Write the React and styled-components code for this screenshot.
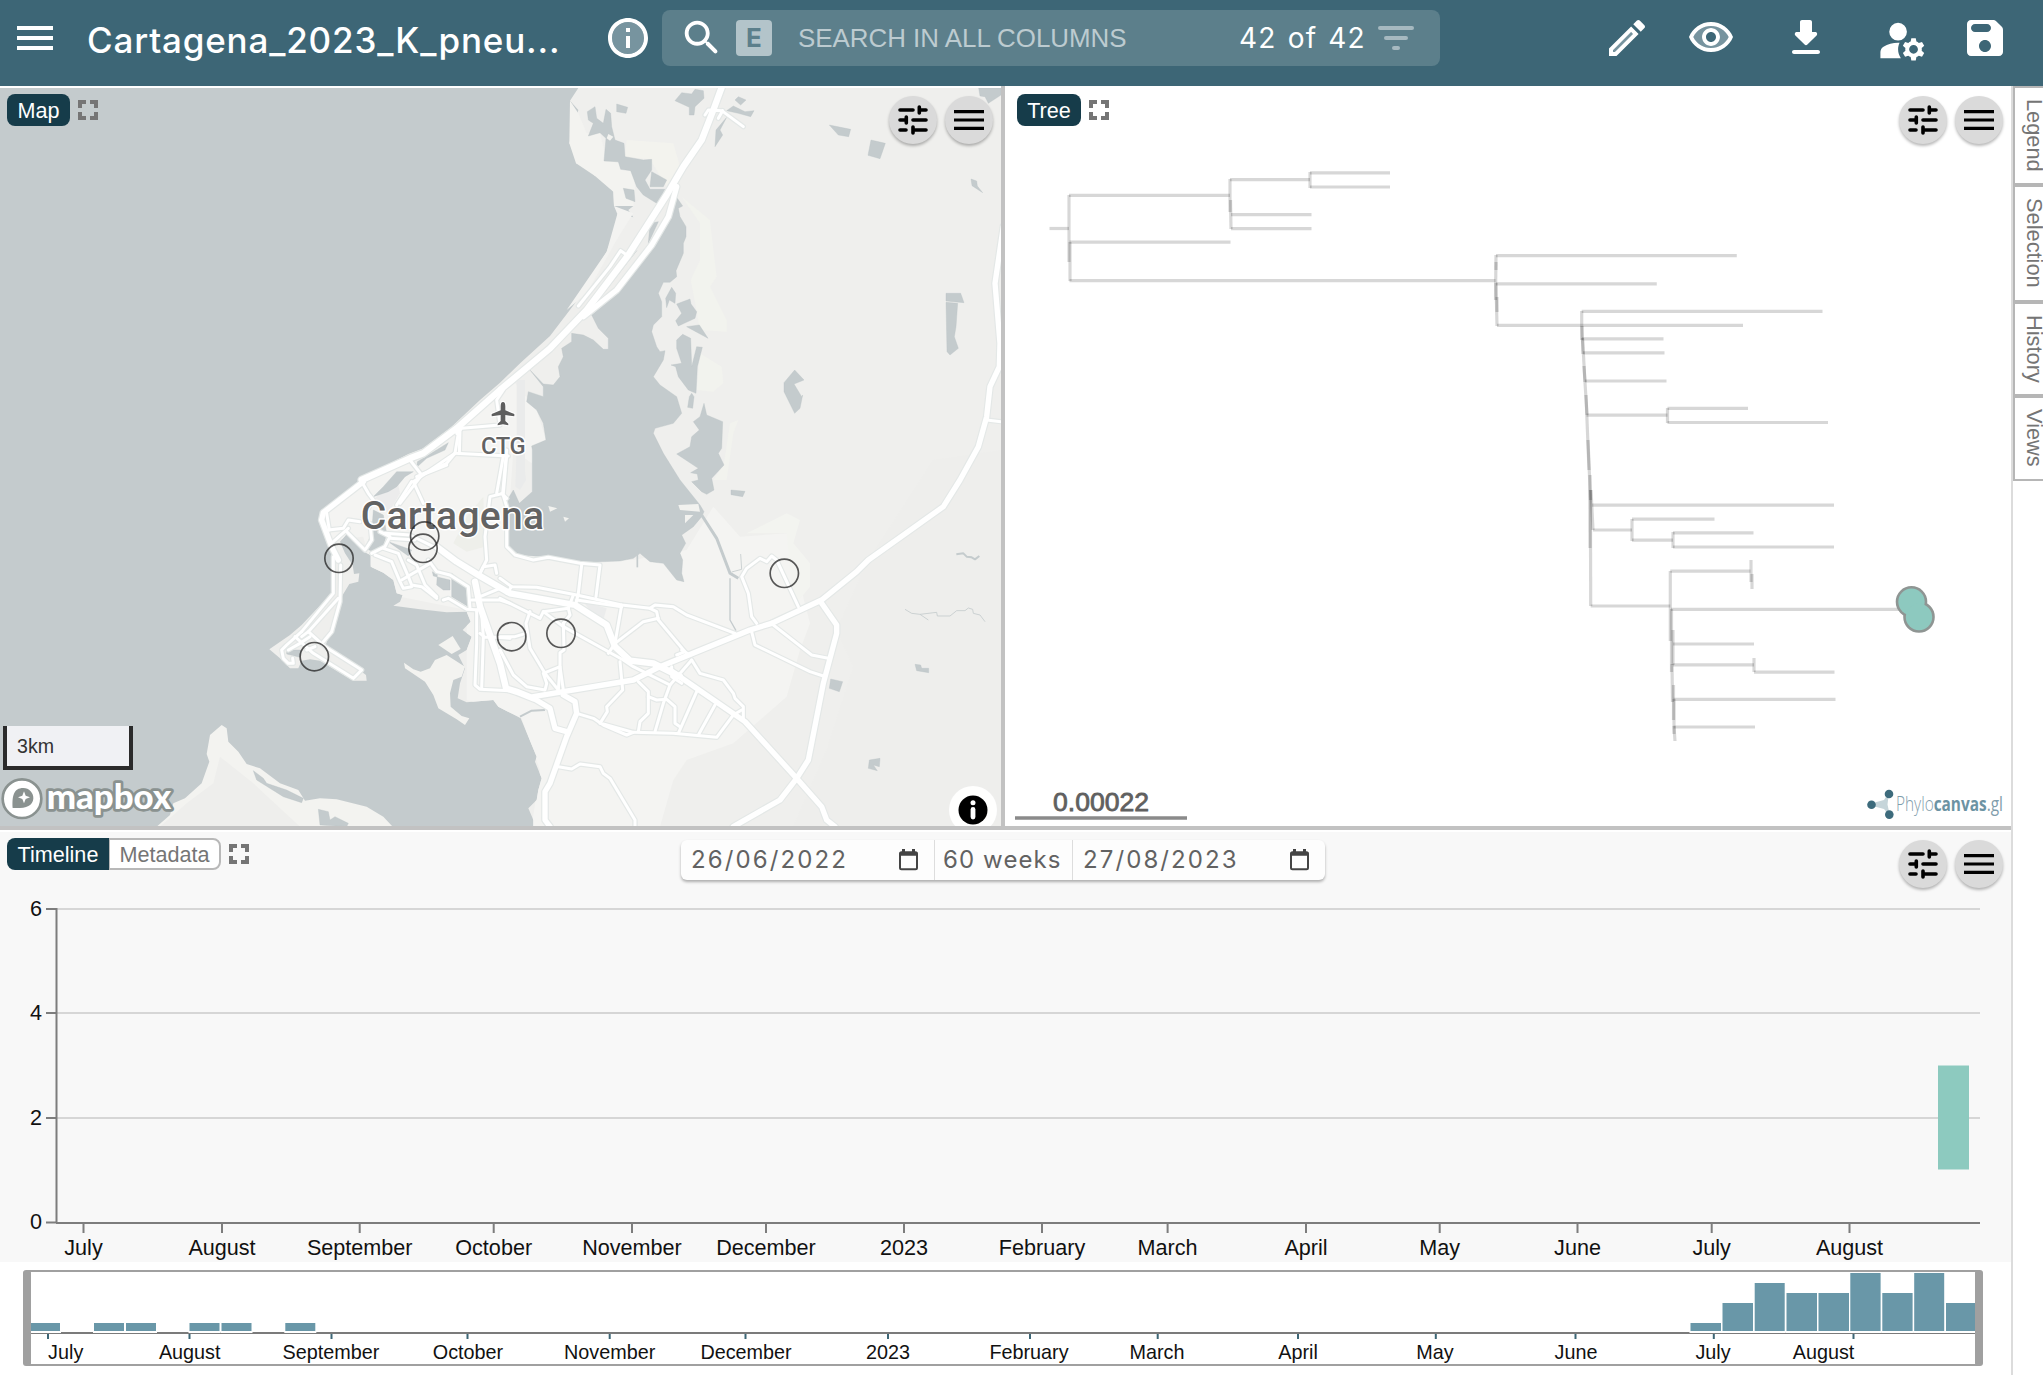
import React from "react";
import styled, { createGlobalStyle } from "styled-components";

const GlobalStyle = createGlobalStyle`
  * { box-sizing: border-box; }
  html, body { margin: 0; background: #fff; overflow: hidden; }
  body { font-family: "Liberation Sans", Arial, sans-serif; font-size: 21.6px; }
  svg { display: block; }
`;

const App_ = styled.div`
  width: 2043px;
  height: 1375px;
  display: flex;
  flex-direction: column;
  overflow: hidden;
`;

/* ---------- header ---------- */
const Header = styled.header`
  height: 86px;
  flex: none;
  background: #3d6676;
  color: #fff;
  display: flex;
  align-items: flex-start;
  padding: 10px 34px 0 17px;
`;
const MenuLines = styled.div`
  width: 36px;
  height: 24px;
  margin-top: 16px;
  display: flex;
  flex-direction: column;
  justify-content: space-between;
  span { height: 4px; background: #fff; }
`;
const Title = styled.h1`
  margin: 0 0 0 34px;
  width: 515px;
  height: 56px;
  font: 500 35px/60px "Inter", sans-serif;
  letter-spacing: 0.82px;
  white-space: nowrap;
`;
const InfoWrap = styled.div`
  margin: 4px 10px 0 2px;
`;
const SearchBox = styled.div`
  width: 778px;
  height: 56px;
  border-radius: 8px;
  background: #5c7f8b;
  display: flex;
  align-items: center;
  padding: 0 17px 0 17px;
`;
const KeyBadge = styled.div`
  width: 36px;
  height: 36px;
  margin-left: 11px;
  border-radius: 4px;
  background: #b3c4ca;
  color: #5c7f8b;
  display: flex;
  align-items: center;
  justify-content: center;
  font: 700 26px/36px "Inter", sans-serif;
`;
const Placeholder = styled.div`
  margin-left: 26px;
  width: 441px;
  font-size: 25.9px;
  color: #bccbd0;
  white-space: nowrap;
`;
const Count = styled.div`
  width: 139px;
  font: 400 28px/57px "Inter", sans-serif;
  letter-spacing: 1.2px;
  word-spacing: 2px;
  white-space: nowrap;
`;
const Actions = styled.nav`
  margin-left: auto;
  display: flex;
  align-items: flex-start;
  padding-top: 4px;
`;
const ActionSlot = styled.div`
  margin-left: ${(p) => p.$gap}px;
  height: 48px;
`;

/* ---------- workspace ---------- */
const Workspace = styled.main`
  flex: 1;
  min-height: 0;
  display: grid;
  grid-template-columns: 2011px 2px 30px;
`;
const Gutter = styled.div`
  background: #dcdcdc;
`;
const Stage = styled.div`
  display: flex;
  flex-direction: column;
`;
const TopRow = styled.div`
  height: 740px;
  display: grid;
  grid-template-columns: 1001px 4px 1006px;
`;
const Splitter = styled.div`
  background: #c2c2c2;
  ${(p) => p.$horizontal && "height: 4px; margin-bottom: 2px;"}
`;
const Pane = styled.section`
  position: relative;
  overflow: hidden;
  background: ${(p) => p.$bg || "#fff"};
  padding-top: ${(p) => p.$top || 0}px;
`;
const PaneTabs = styled.div`
  position: absolute;
  top: ${(p) => p.$top}px;
  left: ${(p) => p.$left}px;
  display: flex;
  align-items: center;
  height: 32px;
`;
const PaneTab = styled.div`
  height: 32px;
  width: ${(p) => p.$w}px;
  display: flex;
  align-items: center;
  justify-content: center;
  padding-top: 1px;
  font-size: 21.6px;
  color: ${(p) => (p.$active ? "#fff" : "#757575")};
  background: ${(p) => (p.$active ? "#163c4a" : "#fff")};
  border: ${(p) => (p.$active ? "none" : "2px solid #b8b8b8")};
  border-left-width: ${(p) => (p.$active ? 0 : 1)}px;
  border-radius: ${(p) => p.$radius || "8px"};
`;
const ExpandSlot = styled.div`
  margin-left: 8px;
`;
const PaneButtons = styled.div`
  position: absolute;
  top: ${(p) => p.$top}px;
  right: 8px;
  display: flex;
  gap: 8px;
`;
const RoundButton = styled.div`
  width: 48px;
  height: 48px;
  border-radius: 50%;
  background: #dadada;
  box-shadow: 0 2px 3px rgba(0, 0, 0, 0.28);
  display: flex;
  align-items: center;
  justify-content: center;
`;
const ScaleBar = styled.div`
  position: absolute;
  left: 3px;
  top: 640px;
  width: 130px;
  height: 44px;
  background: #f0f1f4;
  border: 4px solid #2b2b2b;
  border-top: 0;
  padding-left: 10px;
  font-size: 19.6px;
  line-height: 41px;
  color: #333;
`;
const Attribution = styled.div`
  position: absolute;
  left: 949px;
  top: 700px;
  width: 48px;
  height: 48px;
  border-radius: 24px;
  background: rgba(255, 255, 255, 0.95);
  padding: 9px;
`;

/* ---------- side rail ---------- */
const Rail = styled.aside`
  overflow: hidden;
  background: #fff;
`;
const RailTab = styled.div`
  width: 44px;
  height: ${(p) => p.$h}px;
  border: 2px solid #b6b6b6;
  writing-mode: vertical-rl;
  font-size: 21.8px;
  line-height: 34px;
  color: #757575;
  padding: 11px 0 0 2px;
  display: flex;
  flex-direction: column;
  justify-content: flex-end;
  white-space: nowrap;
`;

/* ---------- timeline ---------- */
const TimelinePane = styled(Pane)`
  height: 430px;
  display: flex;
  flex-direction: column;
`;
const Filters = styled.div`
  width: 644px;
  height: 40px;
  margin: 8px 0 0 681px;
  display: flex;
  align-items: stretch;
  background: #fdfdfd;
  border-radius: 6px;
  box-shadow: 0 2px 3px rgba(0, 0, 0, 0.3);
  font: 400 24px/39px "Inter", sans-serif;
  color: #626262;
`;
const FilterCell = styled.div`
  width: ${(p) => p.$w}px;
  padding: 0 15px 1px ${(p) => p.$pad || 10}px;
  display: flex;
  justify-content: space-between;
  align-items: center;
  white-space: nowrap;
  letter-spacing: ${(p) => p.$ls}px;
  border-left: ${(p) => (p.$first ? "none" : "1px solid #ddd")};
`;
const Chart = styled.div`
  margin-top: auto;
`;

/* ---------- icons ---------- */
const Icon = ({ d, size = 48, tone, color = "#fff" }) => (
  <svg width={size} height={size} viewBox="0 0 24 24" fill={color}>
    {tone && <path d={tone} opacity=".3" />}
    <path d={d} />
  </svg>
);
const I = {
  info: "M11 7h2v2h-2zm0 4h2v6h-2zm1-9C6.48 2 2 6.48 2 12s4.48 10 10 10 10-4.48 10-10S17.52 2 12 2zm0 18c-4.41 0-8-3.59-8-8s3.59-8 8-8 8 3.59 8 8-3.59 8-8 8z",
  infoTone: "M12 4c-4.41 0-8 3.59-8 8s3.59 8 8 8 8-3.59 8-8-3.59-8-8-8z",
  search: "M15.5 14h-.79l-.28-.27C15.41 12.59 16 11.11 16 9.5 16 5.91 13.09 3 9.5 3S3 5.91 3 9.5 5.91 16 9.5 16c1.61 0 3.09-.59 4.23-1.57l.27.28v.79l4.25 4.25c.41.41 1.08.41 1.49 0 .41-.41.41-1.08 0-1.49L15.5 14zm-6 0C7.01 14 5 11.99 5 9.5S7.01 5 9.5 5 14 7.01 14 9.5 11.99 14 9.5 14z",
  edit: "M14.06 9.02l.92.92L5.92 19H5v-.92l9.06-9.06M17.66 3c-.25 0-.51.1-.7.29l-1.83 1.83 3.75 3.75 1.83-1.83c.39-.39.39-1.02 0-1.41l-2.34-2.34c-.2-.2-.45-.29-.71-.29zm-3.6 3.19L3 17.25V21h3.75L17.81 9.94l-3.75-3.75z",
  editTone: "M5 18.08V19h.92l9.06-9.06-.92-.92z",
  eye: "M12 4C7 4 2.73 7.11 1 11.5 2.73 15.89 7 19 12 19s9.27-3.11 11-7.5C21.27 7.11 17 4 12 4zm0 13c-3.79 0-7.17-2.13-8.82-5.5C4.83 8.13 8.21 6 12 6s7.17 2.13 8.82 5.5C19.17 14.87 15.79 17 12 17zm0-10c-2.48 0-4.5 2.02-4.5 4.5S9.52 16 12 16s4.5-2.02 4.5-4.5S14.48 7 12 7zm0 7c-1.38 0-2.5-1.12-2.5-2.5S10.62 9 12 9s2.5 1.12 2.5 2.5S13.38 14 12 14z",
  eyeTone: "M12 6c-3.79 0-7.17 2.13-8.82 5.5C4.83 14.87 8.21 17 12 17s7.17-2.13 8.82-5.5C19.17 8.13 15.79 6 12 6zm0 10c-2.48 0-4.5-2.02-4.5-4.5S9.52 7 12 7s4.5 2.02 4.5 4.5S14.48 16 12 16z",
  download: "M16.59 9H15V4c0-.55-.45-1-1-1h-4c-.55 0-1 .45-1 1v5H7.41c-.89 0-1.34 1.08-.71 1.71l4.59 4.59c.39.39 1.02.39 1.41 0l4.59-4.59c.63-.63.19-1.71-.7-1.71zM5 19c0 .55.45 1 1 1h12c.55 0 1-.45 1-1s-.45-1-1-1H6c-.55 0-1 .45-1 1z",
  manage: "M10 4a4 4 0 1 0 0 8 4 4 0 1 0 0-8zM10.67 13.02C10.45 13.01 10.23 13 10 13c-2.42 0-4.68.67-6.61 1.82C2.51 15.34 2 16.32 2 17.35V20h9.26C10.47 18.87 10 17.49 10 16c0-1.07.25-2.07.67-2.98zM20.75 16c0-.22-.03-.42-.06-.63l1.14-1.01-1-1.73-1.45.49c-.32-.27-.68-.48-1.08-.63L18 11h-2l-.3 1.49c-.4.15-.76.36-1.08.63l-1.45-.49-1 1.73 1.14 1.01c-.03.21-.06.41-.06.63s.03.42.06.63l-1.14 1.01 1 1.73 1.45-.49c.32.27.68.48 1.08.63L16 21h2l.3-1.49c.4-.15.76-.36 1.08-.63l1.45.49 1-1.73-1.14-1.01c.03-.21.06-.41.06-.63zM17 18c-1.1 0-2-.9-2-2s.9-2 2-2 2 .9 2 2-.9 2-2 2z",
  save: "M17.59 3.59c-.38-.38-.89-.59-1.42-.59H5c-1.11 0-2 .9-2 2v14c0 1.1.9 2 2 2h14c1.1 0 2-.9 2-2V7.83c0-.53-.21-1.04-.59-1.41l-2.82-2.83zM12 19c-1.66 0-3-1.34-3-3s1.34-3 3-3 3 1.34 3 3-1.34 3-3 3zm1-10H7c-1.1 0-2-.9-2-2s.9-2 2-2h6c1.1 0 2 .9 2 2s-.9 2-2 2z",
};

const FilterIcon = () => (
  <svg width="36" height="24" viewBox="0 0 36 24" fill="#a6b9c0">
    <rect width="36" height="4" rx="2" />
    <rect x="6" y="10" width="24" height="4" rx="2" />
    <rect x="14" y="20" width="8" height="4" rx="2" />
  </svg>
);
const ExpandIcon = () => (
  <svg width="20" height="20" viewBox="0 0 20 20" fill="none" stroke="#757575" strokeWidth="4">
    <path d="M2 8V2h6M12 2h6v6M18 12v6h-6M8 18H2v-6" />
  </svg>
);
const TuneIcon = () => (
  <svg width="30" height="30" viewBox="0 0 30 30" stroke="#000" strokeWidth="3.6" strokeLinecap="round" fill="none">
    <path d="M2 5H15M21.5 5H28M21.3 2V8M2 15H8M15 15H28M8.3 12V18M2 25H8M15 25H28M15 22V28" />
  </svg>
);
const LinesIcon = () => (
  <svg width="30" height="20" viewBox="0 0 30 20">
    <path d="M0 1.6H30M0 10H30M0 18.4H30" stroke="#000" strokeWidth="3.2" />
  </svg>
);
const CalendarIcon = () => (
  <svg width="22" height="22" viewBox="0 0 22 22" fill="none">
    <rect x="3" y="3.2" width="17" height="17" rx="1.5" stroke="#444" strokeWidth="2" />
    <path d="M2.5 5.2h18M6.5 0v3M16.5 0v3" stroke="#444" strokeWidth="3" />
  </svg>
);
const Controls = ({ top }) => (
  <PaneButtons $top={top}>
    <RoundButton><TuneIcon /></RoundButton>
    <RoundButton><LinesIcon /></RoundButton>
  </PaneButtons>
);

/* ---------- map ----------
   Geometry is kept in four tiles at three units per pixel; each helper
   shifts its tile's points into the shared coordinate space. */
const tile = (ox, oy) => (s) =>
  s.trim().split(/\s+/).map((p) => {
    const [x, y] = p.split(",").map(Number);
    return `${x + ox},${y + oy}`;
  }).join(" ");
const NW = tile(0, 0);
const NE = tile(1500, 0);
const SW = tile(0, 1110);
const SE = tile(1500, 1110);

const mainland = [
  NE("235,24 210,62 235,90 208,190 228,215 228,250 262,262 285,288 312,290 340,335 342,378 400,378 385,390 400,412 352,402 350,435 320,515 275,590 225,670 150,768 62,848 0,908"),
  NW("1440,960 1350,1045 1270,1105 1225,1122 1150,1160"),
  SW("1085,88 1065,105 965,182 958,210 985,275 1000,320 1000,370 995,430 905,525 870,555 808,598 840,625 870,655 895,655 905,632 930,628 960,632 1060,692 1100,692 1098,675 1065,650 975,590 990,550 1020,455 1028,435 1048,402 1075,395 1078,370 1062,372 1058,345 1035,310 1020,275 1040,252 1090,305 1112,315 1112,350 1150,368 1180,390 1190,430 1208,435 1200,455 1180,467 1260,478 1340,487 1400,485 1412,515 1388,540 1415,560 1400,600 1375,615 1395,655 1380,700 1373,745 1400,757 1480,750 1495,770 1530,788"),
  SE("48,797 62,805 85,860 110,920 105,935 125,985 115,1020 110,1050 85,1075 100,1110 100,1130 1503,1130"),
  NE("1503,24"),
].join(" ");

const lands = [
  SW("470,1130 510,1095 520,1060 555,1045 605,1000 628,935 620,912 630,855 665,825 680,835 685,875 715,905 740,942 780,955 840,1000 895,1020 915,1052 960,1045 1010,1048 1100,1070 1150,1100 1178,1130"),
  SW("1315,585 1358,558 1382,597 1355,612"),
  SW("1212,638 1240,658 1262,665 1290,655 1305,630 1340,615 1395,650 1385,680 1360,690 1350,730 1352,770 1385,798 1408,805 1395,825 1370,808 1315,775 1300,735 1275,695 1215,655"),
];

const urban = [
  NW("1500,920 1350,1050 1270,1115 1230,1130 1085,1200"),
  SW("970,190 990,270 1090,260 1112,350 1200,440 1400,480 1400,750 1530,788"),
  SE("65,805 120,960 95,1130 480,1130 520,990 560,930 700,880 860,740 900,600 930,520 860,250 720,260 640,170"),
  SE("560,300 400,330 130,322 20,290 40,0"),
  NE("95,1150 138,1080 110,990 30,890"),
].join(" ");

const tints = [
  [NE("342,378 352,402 320,515 200,690 260,640 350,480 400,400"), "#f3f3f1"],
  [NE("210,62 235,100 260,160 300,160 320,240 355,250 400,275 405,320 400,378 342,378 340,335 285,288 228,250 208,190"), "#f3f3f0"],
  [NE("380,180 520,190 540,260 500,320 450,238 375,230"), "#f3f3ee"],
  [NE("545,350 630,420 650,590 630,620 680,720 680,755 600,750 580,640 572,600 600,540 600,430"), "#f2f3ee"],
  [NE("600,820 665,860 670,910 640,935 590,930"), "#f2f3ee"],
  [NE("690,1030 715,1020 700,1060 680,1200 640,1200 672,1150"), "#f2f3ee"],
  [NE("50,900 75,900 75,1200 50,1200"), "#eaebeb"],
  [SE("50,0 68,0 78,90 60,120 46,110"), "#eaebeb"],
  [SE("740,250 860,190 900,210 880,280 930,340 930,410 880,470 860,250"), "#f3f4f0"],
  [SE("1300,30 1503,0 1503,1130 880,1130 980,900 1060,650 1010,540 1100,340"), "#eeeeec"],
  [SE("250,455 320,475 310,510 280,495"), "#ebecec"],
  [SW("1400,200 1450,140 1455,290 1400,305 1360,280"), "#eeefea"],
  [SW("1120,150 1190,80 1200,130 1165,190"), "#ececec"],
  [SW("480,1130 560,1060 640,1000 660,920 760,1000 900,1130"), "#eeeeec"],
];

const waters = [
  NE("548,378 535,385 540,410 558,440 558,470 550,490 550,520 528,572 530,590 510,607 490,607 475,640 485,665 485,710 460,735 455,755 470,800 480,815 495,812 490,840 460,890 480,915 530,950 545,1000 520,1030 465,1045 460,1060 490,1120 540,1200")
  + " " + SE("600,165 612,185 605,200 580,230 545,255 557,280 540,310 548,330 545,370 552,395 530,390 490,340 450,335 420,310 400,325 360,333 260,337 130,320 60,315 24,290 22,150 40,120 58,160 97,125 97,0")
  + " " + NE("95,1098 138,1080 130,1030 110,990 80,965 85,935 130,950 130,920 90,870 130,912 160,915 180,890 175,860 190,830 185,805 215,785 215,760 250,765 280,780 310,808 325,808 325,775 295,745 275,705 350,640 455,505 515,400 525,345"),
  NE("285,80 262,95 265,120 280,130 265,168 300,158 318,175 312,243 355,245 362,268 392,272 410,320 430,345 470,370 495,345 500,328 450,328 435,300 455,270 455,238 430,240 375,230 372,190 345,180 335,140 332,100 318,88 310,130 290,115"),
  NE("455,275 500,300 490,320 450,320"),
  NE("350,72 383,82 378,100 350,95"),
  NE("525,62 545,38 575,42 585,28 610,32 612,55 585,80 582,105 568,105 568,82"),
  NE("705,60 715,50 738,60 722,75"), NE("680,92 700,78 735,95 762,92 752,110 715,100"),
  NE("680,112 660,150 668,165 645,200 648,150"),
  NE("988,135 1052,148 1046,170 1015,165"), NE("1113,180 1156,190 1140,236 1104,226"),
  NE("1413,297 1430,303 1432,318 1448,338 1416,317"), NE("1436,24 1503,24 1503,45 1465,70 1455,50 1440,48"),
  NE("1338,640 1382,640 1392,668 1338,663"),
  NE("1338,667 1373,670 1368,740 1363,770 1375,805 1350,825 1341,815"),
  NE("884,870 912,900 882,912 905,950 908,945 900,985 884,1000 852,935 852,908"),
  NE("515,622 527,640 525,670 508,660 500,683 497,655"),
  NE("530,672 570,657 573,672 590,695 585,715 535,738 527,722 545,700"),
  NE("560,740 598,735 624,775"),
  NE("548,763 572,775 575,860 590,800 607,802 592,860 588,940 565,930 535,890 527,860 513,855 545,850 530,805 530,780"),
  NE("575,940 582,950 578,985 563,982 568,950"),
  NE("612,970 620,1005 668,1025 665,1105 655,1120 672,1155") + " " +
    SE("635,85 642,120 620,133 605,125 575,95 595,90 592,72 572,68 595,55 530,12") + " " +
    NE("570,1100 575,1070 598,1050 580,1025 600,1010"),
  NE("370,325 402,330 405,365 378,355"),
  NE("450,430 475,425 445,490"), NE("410,512 315,635 350,580 400,525"),
  SE("693,120 735,124 728,140 693,134"), SE("992,687 1028,695 1018,725 988,715"),
  SE("1245,643 1262,645 1265,655 1286,655 1286,668 1250,662"),
  SE("1108,930 1140,925 1138,950 1120,945 1132,962 1105,955"),
  SW("760,962 790,985 800,1000 860,1020 910,1045 905,1058 850,1040 770,990"),
  SW("955,1078 985,1085 990,1110 1005,1100 1045,1120 1040,1130 960,1125"),
  SW("1190,65 1240,65 1215,80 1190,110 1165,125 1120,140 1150,110"),
  SW("1252,35 1345,-22 1335,0 1280,25 1250,52"),
  SW("1120,180 1150,195 1160,250 1150,290 1120,305 1095,295 1115,250"),
  SW("1165,275 1235,300 1225,318"), SW("1355,370 1395,400 1405,470 1355,440"),
  SW("1297,365 1312,372 1310,405 1330,420 1350,420 1350,390 1300,378"),
  SW("860,600 905,600 900,622 860,612"),
];
const islands = [
  SE("145,168 172,175 150,185"), SE("190,200 207,205 195,215"),
  NE("325,162 340,170 330,182 320,175"),
  SE("535,165 595,162 600,185 540,180"), SE("555,195 580,195 555,220"),
];
const streams = [
  [SE("605,195 650,265 690,370 715,385"), 9],
  [SE("690,385 690,510 708,542"), 4],
  [SE("722,312 725,358 695,366"), 2.5],
  [SE("1369,313 1390,310 1400,320 1415,322 1425,328 1438,318"), 6],
  [SE("1215,478 1235,490 1260,493 1310,487 1312,498 1350,498 1370,482 1395,482 1405,474 1418,478 1420,490 1440,495 1455,515"), 2.5],
  [SE("1260,493 1285,510"), 2.5],
  [SE("412,295 412,352"), 5],
  [SE("60,800 95,782 135,780"), 6],
];

const minor = [
  NE("615,105 625,90 665,92 730,140"), NE("655,115 668,92"), NE("380,525 362,512 330,560 235,678"), NE("1460,1020 1503,1025"),
  NW("1370,1060 1385,1045 1500,1035 1490,960 1510,930"), NW("1375,1060 1365,1120 1525,1128"), NW("1380,1050 1378,1120"),
  NW("1510,1128 1490,1240"), NW("1250,1190 1340,1150 1365,1120"), NW("1365,1120 1240,1205"),
  SE("20,0 8,130 20,170 20,290 45,315 100,330 145,322 240,340 300,345 288,440"),
  SE("0,385 35,410 110,412 230,435 365,465 450,475 465,465 520,470 560,495 705,550"),
  SE("35,410 20,430"), SE("230,450 365,470"),
  SE("245,345 235,430 228,460"), SE("0,445 120,505 130,485 205,475 210,495 190,520"), SE("205,475 220,435"),
  SE("90,485 78,520 90,595 135,670 175,720"), SE("0,560 45,560 78,550"),
  SE("130,485 190,530 370,630 400,650 510,705"), SE("190,520 192,600 180,608 180,650 190,720"),
  SE("175,720 180,650 130,670 140,700 135,720 80,710 40,675 0,600"),
  SE("365,465 345,580 325,610"), SE("345,580 430,515 475,505"), SE("450,475 470,485 475,510 555,605 530,615"),
  SE("545,600 570,615"), SE("360,635 368,720 320,770 322,785 300,820"),
  SE("230,790 280,805 310,825 380,855 400,847 310,822"), SE("400,847 520,850 650,862 700,795 725,780"),
  SE("415,695 445,725 445,790 420,815 415,845"), SE("445,740 470,750 500,748 525,770 525,820 540,830"),
  SE("575,630 510,705 490,760 465,845"), SE("590,725 535,850"), SE("645,765 595,855"),
  SE("575,630 600,670 670,690 700,730 705,745 730,770 730,810"), SE("755,545 765,585 930,665 970,678"),
  SE("820,525 935,615 985,625"), SE("895,470 830,330 815,318 800,335 780,325 740,355 725,380 745,430 755,500 770,520"),
  SE("175,950 215,957 240,942 300,950 310,970 330,985 405,1110 405,1130"), SE("515,650 515,680 545,700"),
  SW("1085,95 1105,130 1120,150 1090,200"), SW("1230,30 1265,75 1200,160"), SW("1265,75 1340,45"),
  SW("1520,15 1510,130 1470,140 1455,260 1460,330 1440,370"), SW("1235,95 1190,165"), SW("1240,95 1270,160"),
  SW("980,190 988,240"), SW("985,240 1030,235 1045,210 1080,215"), SW("1000,275 1045,235"), SW("1040,245 1095,300 1115,270 1110,220"),
  SW("1115,310 1155,290 1170,260 1140,245"), SW("1125,315 1175,335 1200,395 1210,415 1235,410"),
  SW("1150,295 1195,310 1225,380 1235,405 1265,410 1310,445"), SW("1205,390 1290,340"), SW("1155,250 1230,255 1300,290"),
  SW("1170,265 1245,270"), SW("1225,330 1250,345 1275,405 1310,440"), SW("1285,330 1310,365 1350,375 1405,410 1410,475"),
  SW("1000,320 1000,430 905,545"), SW("1022,345 1020,455 995,545 970,575"),
  SW("1015,445 925,545"), SW("905,545 860,585 845,600 850,625 865,640 880,640 878,625"),
  SW("885,560 940,610 1060,685 1085,660 975,590 925,545 905,560"), SW("865,600 900,580 930,560"), SW("920,600 945,590"),
  SW("1330,450 1345,445 1400,478 1440,480"), SW("1430,480 1430,580 1425,705 1440,718 1530,722"),
  SW("1445,490 1450,560 1445,715"), SW("1440,550 1455,562 1490,562 1530,565"), SW("1415,450 1500,450 1530,460"),
  SW("1440,440 1500,415"), SW("1440,370 1450,350 1485,345 1490,370"), SW("1520,145 1505,130"),
];
const major = [
  NE("530,320 505,410 455,495 350,630 250,710"),
  SW("1090,95 970,188 965,210 995,290 1015,330"),
  SE("100,745 150,775 165,835 200,845"),
  SE("190,735 225,755 230,790 200,860 150,1000 135,1025 135,1110 150,1130"),
  SE("815,520 750,540 480,650 400,690 190,725 100,740"),
  SE("965,460 1010,525 1010,550 970,700 925,930 890,985 840,1050 700,1130"),
  SE("510,660 735,815 890,985 965,1070 980,1110 1005,1130"),
  NE("1510,440 1485,610 1500,790 1498,860 1470,920 1460,1010 1435,1100 1380,1200") + " " +
    SE("1330,170 1105,330 1070,365 965,450 815,520"),
];
const trunk = [
  NE("668,14 640,90 605,180 550,260 500,345 385,525 260,690 150,805 0,930") + " " +
    NW("1370,1045 1270,1120 1230,1135 1085,1200"),
  SW("1310,290 1370,335 1440,378 1530,430") + " " + SE("225,465 320,525 345,590 390,632 460,640 540,680"),
  SW("1425,395 1440,470 1500,640 1518,715") + " " + SE("50,725 100,745"),
];

const Road = ({ points, w }) => (
  <polyline points={points} strokeWidth={w} />
);
const roadLayers = [[minor, 9], [major, 16], [trunk, 19]];

const samples = [
  [1017, 1435], [1274, 1368], [1269, 1405], [943, 1730], [1535, 1670], [1683, 1660], [2353, 1480],
];

const MapView = () => (
  <svg width="1001" height="738" viewBox="0 24 3003 2214">
    <rect y="24" width="3003" height="2214" fill="#c4cbcd" />
    <g fill="#efefed">
      <polygon points={mainland} />
      {lands.map((p, i) => <polygon key={i} points={p} fill="#f3f3f0" />)}
    </g>
    <polygon points={urban} fill="#f4f4f2" clipPath="url(#land)" />
    <clipPath id="land"><polygon points={mainland} /></clipPath>
    {tints.map(([p, c], i) => <polygon key={i} points={p} fill={c} />)}
    <g fill="#c4cbcd" stroke="#b7bfc1" strokeWidth="1">
      {waters.map((p, i) => <polygon key={i} points={p} />)}
    </g>
    {islands.map((p, i) => <polygon key={i} points={p} fill="#f2f2ef" />)}
    <g fill="none" stroke="#c4cbcd" strokeLinejoin="round">
      {streams.map(([p, w], i) => <polyline key={i} points={p} strokeWidth={w} />)}
    </g>
    <g fill="none" stroke="#e4e8e7" strokeLinejoin="round" strokeLinecap="round">
      {roadLayers.map(([list, w]) => list.map((p, i) => <Road key={w + "-" + i} points={p} w={w + 7} />))}
    </g>
    <g fill="none" stroke="#fff" strokeLinejoin="round" strokeLinecap="round">
      {roadLayers.map(([list, w]) => list.map((p, i) => <Road key={w + "-" + i} points={p} w={w} />))}
    </g>
    <path
      d="M1509 966q7 0 7 13v12l27 11v7l-27-4v18l9 8v5l-16-3-16 3v-5l9-8v-18l-27 4v-7l27-11v-12q0-13 7-13z"
      fill="#5e5e5e" stroke="#fff" strokeWidth="6" paintOrder="stroke"
    />
    <g fontFamily="Roboto, sans-serif" fill="#636363" stroke="#fff" strokeWidth="9" paintOrder="stroke" strokeLinejoin="round">
      <text x="1443" y="1123" fontSize="71" fontWeight="500" textLength="134">CTG</text>
      <text x="1082" y="1348" fontSize="117" fontWeight="500" textLength="550">Cartagena</text>
    </g>
    <g fill="none" stroke="#222" strokeOpacity=".75" strokeWidth="5">
      {samples.map(([x, y], i) => <circle key={i} cx={x} cy={y} r="42.5" />)}
    </g>
    <circle cx="66" cy="2156" r="58" fill="#fff" stroke="#8a9290" strokeWidth="8" />
    <path d="M38 2184C36 2150 40 2124 70 2124A30 30 0 0 1 100 2156C98 2178 76 2186 38 2184Z" fill="#8a9290" />
    <path d="M72 2134l5 13 13 5-13 5-5 13-5-13-13-5 13-5z" fill="#fff" />
    <text
      x="140" y="2186" fontFamily="Lato, sans-serif" fontWeight="900" fontSize="101" textLength="374" lengthAdjust="spacingAndGlyphs"
      fill="#fff" stroke="#8a9290" strokeWidth="16" strokeLinejoin="round" paintOrder="stroke"
    >mapbox</text>
  </svg>
);

/* ---------- tree ---------- */
const branches = [
  [1049.5, 228.5, 1069], [1069, 195.3, 1230], [1230, 179.7, 1310], [1310, 172.8, 1390], [1310, 187, 1390],
  [1231, 214.6, 1311.5], [1231, 228.6, 1311.5], [1069.5, 242.2, 1230.5], [1069.5, 280.7, 1495.5],
  [1496, 255.7, 1736.8], [1496, 283.8, 1656.8], [1497, 325.4, 1743], [1581.7, 311.3, 1822.5],
  [1582, 338.9, 1663.5], [1583, 352.9, 1664.5], [1585, 381, 1666.5], [1586.5, 415.2, 1667.5],
  [1667.5, 408.4, 1748], [1667.5, 422.5, 1828], [1592, 505.2, 1834], [1593, 530, 1632], [1632, 519.2, 1714.5],
  [1632, 540.2, 1673], [1673, 532.9, 1753.5], [1673, 547, 1834], [1590.7, 606, 1670.3], [1670.3, 571.2, 1750.5],
  [1671, 609.3, 1900], [1673, 644, 1754], [1673, 664.8, 1754], [1754, 672.2, 1834.5], [1673.5, 699.3, 1835.5],
  [1673.5, 727, 1755],
];
const stems = [
  [1069, 195, 1069, 262], [1070, 242, 1070, 281], [1230, 179, 1230, 212], [1230.5, 200, 1231, 229], [1310, 172, 1310, 188],
  [1496, 255, 1495.5, 300], [1496, 262, 1496, 270], [1496, 283, 1497, 326], [1497, 297, 1497, 312], [1581.7, 311, 1581.7, 340], [1582, 326, 1583, 354],
  [1582.5, 338, 1585, 382], [1584, 366, 1587, 415], [1586, 395, 1589, 470], [1588, 440, 1590.5, 500], [1590, 475, 1590, 548],
  [1591, 490, 1593, 530], [1590.4, 490, 1590.7, 606], [1667.5, 408, 1667.5, 423], [1632, 519, 1632, 541], [1673, 532, 1673, 548],
  [1670.3, 571, 1670.3, 641], [1671.5, 609, 1671.5, 672], [1673, 630, 1673, 665], [1672, 664, 1672.5, 702], [1673.5, 685, 1673.5, 720],
  [1674, 699, 1674, 734], [1674, 726, 1675, 741], [1751, 560, 1751, 582], [1752, 574, 1752, 589], [1754, 658, 1754, 672],
];
const TreeView = () => (
  <svg width="1006" height="740" viewBox="1005 86 1006 740">
    <g stroke="#000" strokeOpacity=".155" strokeWidth="3.2">
      {branches.map(([x, y, x2], i) => <line key={i} x1={x} y1={y} x2={x2} y2={y} />)}
      {stems.map(([x, y, x2, y2], i) => <line key={i} x1={x} y1={y} x2={x2} y2={y2} />)}
    </g>
    <g stroke="#8f9593" strokeWidth="4"><circle cx="1911.5" cy="601.8" r="13.8" /><circle cx="1919" cy="617" r="13.8" /></g>
    <g fill="#8dc9bf"><circle cx="1911.5" cy="601.8" r="13.2" /><circle cx="1919" cy="617" r="13.2" /></g>
    <text x="1053" y="810.5" fontFamily="'Liberation Sans', sans-serif" fontSize="26" fontWeight="400" fill="#606060" stroke="#606060" strokeWidth=".8" textLength="96" lengthAdjust="spacingAndGlyphs">0.00022</text>
    <line x1="1015" x2="1187" y1="818" y2="818" stroke="#8a8a8a" strokeWidth="3.4" />
    <path d="M1867 804.5L1884 800L1889 792L1887.5 804.5L1890 816L1884 809Z" fill="#c6d5da" />
    <g fill="#3d6b7c"><circle cx="1871.5" cy="804.7" r="4.3" /><circle cx="1889" cy="794" r="4.3" /><circle cx="1889.3" cy="814.6" r="4.3" /></g>
    <text x="1896" y="811" fontFamily="'Open Sans', sans-serif" fontSize="20" textLength="107" lengthAdjust="spacingAndGlyphs" fill="#7f9dab">
      <tspan fontWeight="300">Phylo</tspan><tspan fontWeight="700" fill="#6c93a3">canvas</tspan><tspan>.gl</tspan>
    </text>
  </svg>
);

/* ---------- timeline charts ---------- */
const months = ["July", "August", "September", "October", "November", "December", "2023", "February", "March", "April", "May", "June", "July", "August"];
const mainX = [83.5, 222, 359.7, 493.7, 632, 766, 904, 1042, 1167.6, 1306, 1439.7, 1577.5, 1711.7, 1849.5];
const brushTickX = [48, 189.5, 331.5, 467.5, 609.7, 745.5, 888, 1030, 1157.7, 1298, 1435.8, 1575.5, 1713.8, 1853.5];
const brushX = [65.7, 189.7, 331, 468, 609.7, 746, 888, 1029, 1157, 1298, 1435, 1576, 1713, 1823.5];
const yTicks = [[6, 909], [4, 1013], [2, 1118], [0, 1222.5]];
const MainChart = () => (
  <svg width="2011" height="370" viewBox="0 892 2011 370" fontFamily="'Liberation Sans', Arial, sans-serif" fontSize="21.6" fill="#111">
    {yTicks.map(([v, y]) => (
      <g key={v}>
        {v > 0 && <rect x="57" y={y - 1} width="1923" height="2" fill="#d6d6d6" />}
        <rect x="46" y={y - 1} width="10" height="2" fill="#7d7d7d" />
        <text x="42" y={y + 6.5} textAnchor="end">{v}</text>
      </g>
    ))}
    <rect x="55.5" y="908" width="2" height="315" fill="#7d7d7d" />
    <rect x="1938" y="1065.5" width="31" height="104" fill="#8dcabf" />
    <rect x="56" y="1222" width="1924" height="2" fill="#7d7d7d" />
    {months.map((m, i) => (
      <g key={i}>
        <rect x={mainX[i] - 1} y="1224" width="2" height="9" fill="#7d7d7d" />
        <text x={mainX[i]} y="1255" textAnchor="middle">{m}</text>
      </g>
    ))}
  </svg>
);
const bins = [
  [31, 29, 1], [94, 30, 1], [126, 30, 1], [189.5, 30, 1], [221.5, 30, 1], [285.3, 30, 1],
  [1690.5, 30.5, 1], [1722.5, 30.5, 3], [1754.7, 30, 5], [1786.5, 30.5, 4], [1818.5, 30.5, 4], [1850.3, 30.3, 6], [1882.3, 30.3, 4], [1914.2, 30, 6], [1946, 29, 3],
];
const barHeights = { 1: 8, 3: 28, 4: 38, 5: 48, 6: 58 };
const BrushChart = () => (
  <svg width="2011" height="113" viewBox="0 1262 2011 113" fontFamily="'Liberation Sans', Arial, sans-serif" fontSize="19.8" fill="#111">
    <rect x="31" y="1332" width="1945" height="2" fill="#7b7b7b" />
    {bins.map(([x, w, n]) => (
      <g key={x}>
        <rect x={x - 1} y={1331 - barHeights[n]} width={w + 2} height={barHeights[n] + 2} fill="#fff" />
        <rect x={x} y={1331 - barHeights[n]} width={w} height={barHeights[n]} fill="#6997a8" />
      </g>
    ))}
    {months.map((m, i) => (
      <g key={i}>
        <rect x={brushTickX[i] - 1} y="1334" width="2" height="5" fill="#3d6676" />
        <text x={brushX[i]} y="1359" textAnchor="middle">{m}</text>
      </g>
    ))}
    <g fill="#a0a0a0">
      <rect x="26" y="1270" width="1954" height="2" />
      <rect x="26" y="1364" width="1954" height="2" />
      <rect x="23" y="1270" width="8" height="96" rx="3" />
      <rect x="1975" y="1270" width="8" height="96" rx="3" />
    </g>
  </svg>
);

export default function App() {
  return (
    <App_>
      <GlobalStyle />
      <Header>
        <MenuLines><span /><span /><span /></MenuLines>
        <Title>Cartagena_2023_K_pneu...</Title>
        <InfoWrap><Icon d={I.info} tone={I.infoTone} /></InfoWrap>
        <SearchBox>
          <Icon d={I.search} size={46} />
          <KeyBadge>E</KeyBadge>
          <Placeholder>SEARCH IN ALL COLUMNS</Placeholder>
          <Count>42 of 42</Count>
          <FilterIcon />
        </SearchBox>
        <Actions>
          <ActionSlot $gap={0}><Icon d={I.edit} tone={I.editTone} /></ActionSlot>
          <ActionSlot $gap={36}><Icon d={I.eye} tone={I.eyeTone} /></ActionSlot>
          <ActionSlot $gap={47}><Icon d={I.download} /></ActionSlot>
          <ActionSlot $gap={46}><Icon d={I.manage} size={53} /></ActionSlot>
          <ActionSlot $gap={32}><Icon d={I.save} /></ActionSlot>
        </Actions>
      </Header>
      <Workspace>
        <Stage>
          <TopRow>
            <Pane $top={2}>
              <MapView />
              <PaneTabs $top={8} $left={7}>
                <PaneTab $active $w={63}>Map</PaneTab>
                <ExpandSlot><ExpandIcon /></ExpandSlot>
              </PaneTabs>
              <Controls top={10} />
              <ScaleBar>3km</ScaleBar>
              <Attribution>
                <svg width="30" height="30" viewBox="0 0 30 30">
                  <circle cx="15" cy="15" r="14.5" />
                  <circle cx="15" cy="7.7" r="2.5" fill="#fff" />
                  <rect x="12.6" y="12" width="4.8" height="12.5" rx="2.4" fill="#fff" />
                </svg>
              </Attribution>
            </Pane>
            <Splitter />
            <Pane>
              <TreeView />
              <PaneTabs $top={8} $left={12}>
                <PaneTab $active $w={64}>Tree</PaneTab>
                <ExpandSlot><ExpandIcon /></ExpandSlot>
              </PaneTabs>
              <Controls top={10} />
            </Pane>
          </TopRow>
          <Splitter $horizontal />
          <TimelinePane $bg="#f8f8f8">
            <PaneTabs $top={6} $left={7}>
              <PaneTab $active $w={102} $radius="8px 0 0 8px">Timeline</PaneTab>
              <PaneTab $w={112} $radius="0 8px 8px 0">Metadata</PaneTab>
              <ExpandSlot><ExpandIcon /></ExpandSlot>
            </PaneTabs>
            <Controls top={8} />
            <Filters>
              <FilterCell $first $w={253} $ls={2.1}>26/06/2022<CalendarIcon /></FilterCell>
              <FilterCell $w={138} $ls={1.1} $pad={8}>60 weeks</FilterCell>
              <FilterCell $w={253} $ls={2.1}>27/08/2023<CalendarIcon /></FilterCell>
            </Filters>
            <Chart><MainChart /></Chart>
          </TimelinePane>
          <BrushChart />
        </Stage>
        <Gutter />
        <Rail>
          <RailTab $h={99}>Legend</RailTab>
          <RailTab $h={117}>Selection</RailTab>
          <RailTab $h={94}>History</RailTab>
          <RailTab $h={85}>Views</RailTab>
        </Rail>
      </Workspace>
    </App_>
  );
}
